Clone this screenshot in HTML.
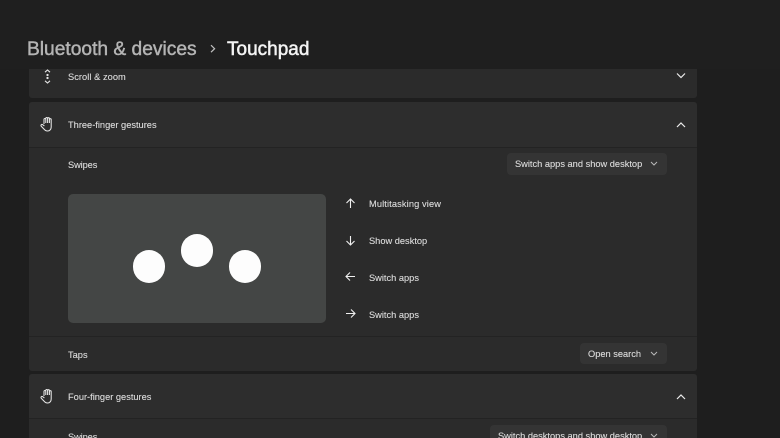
<!DOCTYPE html>
<html><head><meta charset="utf-8"><style>
html,body{margin:0;padding:0;width:780px;height:438px;overflow:hidden;background:#1e1e1e}
#r{position:relative;width:780px;height:438px;overflow:hidden;background:#1e1e1e;font-family:"Liberation Sans",sans-serif;color:#dcdcdc}
#r div,#r svg{position:absolute}
.t{font-size:9.27px;line-height:12px;white-space:nowrap;color:#dedede;-webkit-text-stroke:.1px #dedede}
.card{left:29px;width:668px;background:#2b2b2b}
.hd{left:29px;width:668px;background:#2d2d2d}
.line{left:29px;width:668px;height:1px;background:#1f1f1f}
.dd{background:#343434;border-radius:4px}
.c{width:32.4px;height:32.4px;border-radius:50%;background:#fdfdfd}
svg{overflow:visible}
</style></head><body><div id="r">
<div style="left:0;top:0;width:780px;height:69px;background:#1f1f1f"></div>
<div style="left:27px;top:38px;font-size:19.2px;line-height:24px;color:#b4b4b4;-webkit-text-stroke:.45px #b4b4b4;white-space:nowrap">Bluetooth &amp; devices</div>
<svg style="left:209px;top:44px" width="8" height="10" fill="none" stroke="#c0c0c0" stroke-width="1.2"><path d="M2 1.2L5.6 4.7L2 8.2"/></svg>
<div style="left:227px;top:38px;font-size:19px;line-height:24px;color:#f4f4f4;-webkit-text-stroke:.5px #f4f4f4;white-space:nowrap">Touchpad</div>

<div class="card" style="top:69px;height:29px;background:#2b2b2b;border-radius:0 0 3px 3px"></div>
<svg style="left:42px;top:69px" width="12" height="16" fill="none" stroke="#e4e4e4" stroke-width="1.1"><path d="M3 3.2L5.5 1L8 3.2M3 11.8L5.5 14L8 11.8"/><circle cx="5.5" cy="6" r=".6" fill="#e4e4e4"/><circle cx="5.5" cy="9" r=".6" fill="#e4e4e4"/></svg>
<div class="t" style="left:68px;top:71px;letter-spacing:.05px">Scroll &amp; zoom</div>
<svg style="left:676px;top:72px" width="10" height="8" fill="none" stroke="#ececec" stroke-width="1.2"><path d="M1 1.5L5 5.5L9 1.5"/></svg>

<div class="hd" style="top:102px;height:45px;border-radius:3px 3px 0 0"></div>
<div class="line" style="top:147px;background:#232323"></div>
<div class="card" style="top:148px;height:223px;border-radius:0 0 3px 3px"></div>
<svg style="left:40px;top:117px" width="14" height="15" fill="none" stroke="#e8e8e8" stroke-width="1.05"><path d="M4 7V2.4a.9.9 0 0 1 1.8 0V6M5.8 6V1.4a.9.9 0 0 1 1.8 0V6M7.6 6V1.600a.9.9 0 0 1 1.8 0V6M9.4 6V2.6a.9.9 0 0 1 1.8 0V10c0 2.4-1.6 4-3.6 4c-1.8 0-2.8-.8-3.6-1.9L1.2 9.2C.5 8 1.6 7 2.6 7.6L4.4 9"/></svg>
<div class="t" style="left:68px;top:119px">Three-finger gestures</div>
<svg style="left:676px;top:120.5px" width="10" height="8" fill="none" stroke="#ececec" stroke-width="1.2"><path d="M1 6L5 2L9 6"/></svg>
<div class="t" style="left:68px;top:159px;letter-spacing:-.1px">Swipes</div>
<div class="dd" style="left:507px;top:153px;width:160px;height:22px"></div>
<div class="t" style="left:515px;top:158px">Switch apps and show desktop</div>
<svg style="left:650px;top:161px" width="8" height="6" fill="none" stroke="#b8b8b8" stroke-width="1"><path d="M1 1L4 4L7 1"/></svg>

<div style="left:68px;top:194px;width:258px;height:129px;background:#444645;border-radius:5px"></div>
<div class="c" style="left:132.5px;top:250.4px"></div>
<div class="c" style="left:180.7px;top:234.3px"></div>
<div class="c" style="left:228.8px;top:250.4px"></div>

<svg style="left:345px;top:198px" width="11" height="11" fill="none" stroke="#f0f0f0" stroke-width="1.1"><path d="M5.5 10V1M1.5 5L5.5 1L9.5 5"/></svg>
<div class="t" style="left:369px;top:198px;letter-spacing:.12px">Multitasking view</div>
<svg style="left:345px;top:235px" width="11" height="11" fill="none" stroke="#f0f0f0" stroke-width="1.1"><path d="M5.5 1V10M1.5 6L5.5 10L9.5 6"/></svg>
<div class="t" style="left:369px;top:235px">Show desktop</div>
<svg style="left:345px;top:271px" width="11" height="11" fill="none" stroke="#f0f0f0" stroke-width="1.1"><path d="M10 5.5H1M5 1.5L1 5.5L5 9.5"/></svg>
<div class="t" style="left:369px;top:272px">Switch apps</div>
<svg style="left:345px;top:308px" width="11" height="11" fill="none" stroke="#f0f0f0" stroke-width="1.1"><path d="M1 5.5H10M6 1.5L10 5.5L6 9.5"/></svg>
<div class="t" style="left:369px;top:309px">Switch apps</div>

<div class="line" style="top:336px;background:#232323"></div>
<div class="t" style="left:68px;top:349px">Taps</div>
<div class="dd" style="left:580px;top:343px;width:87px;height:21px"></div>
<div class="t" style="left:588px;top:348px">Open search</div>
<svg style="left:650px;top:351px" width="8" height="6" fill="none" stroke="#b8b8b8" stroke-width="1"><path d="M1 1L4 4L7 1"/></svg>

<div class="hd" style="top:374px;height:44px;border-radius:3px 3px 0 0"></div>
<div class="line" style="top:418px;background:#232323"></div>
<div class="card" style="top:419px;height:19px"></div>
<svg style="left:40px;top:389px" width="14" height="15" fill="none" stroke="#e8e8e8" stroke-width="1.05"><path d="M4 7V2.4a.9.9 0 0 1 1.8 0V6M5.8 6V1.4a.9.9 0 0 1 1.8 0V6M7.6 6V1.6a.9.9 0 0 1 1.8 0V6M9.4 6V2.6a.9.9 0 0 1 1.8 0V10c0 2.4-1.6 4-3.6 4c-1.8 0-2.8-.8-3.6-1.9L1.2 9.2C.5 8 1.6 7 2.6 7.6L4.4 9"/></svg>
<div class="t" style="left:68px;top:391px">Four-finger gestures</div>
<svg style="left:676px;top:392.5px" width="10" height="8" fill="none" stroke="#ececec" stroke-width="1.2"><path d="M1 6L5 2L9 6"/></svg>
<div class="t" style="left:68px;top:431px;letter-spacing:-.1px">Swipes</div>
<div class="dd" style="left:490px;top:425px;width:177px;height:22px"></div>
<div class="t" style="left:498px;top:430px">Switch desktops and show desktop</div>
<svg style="left:650px;top:433px" width="8" height="6" fill="none" stroke="#b8b8b8" stroke-width="1"><path d="M1 1L4 4L7 1"/></svg>
</div></body></html>
